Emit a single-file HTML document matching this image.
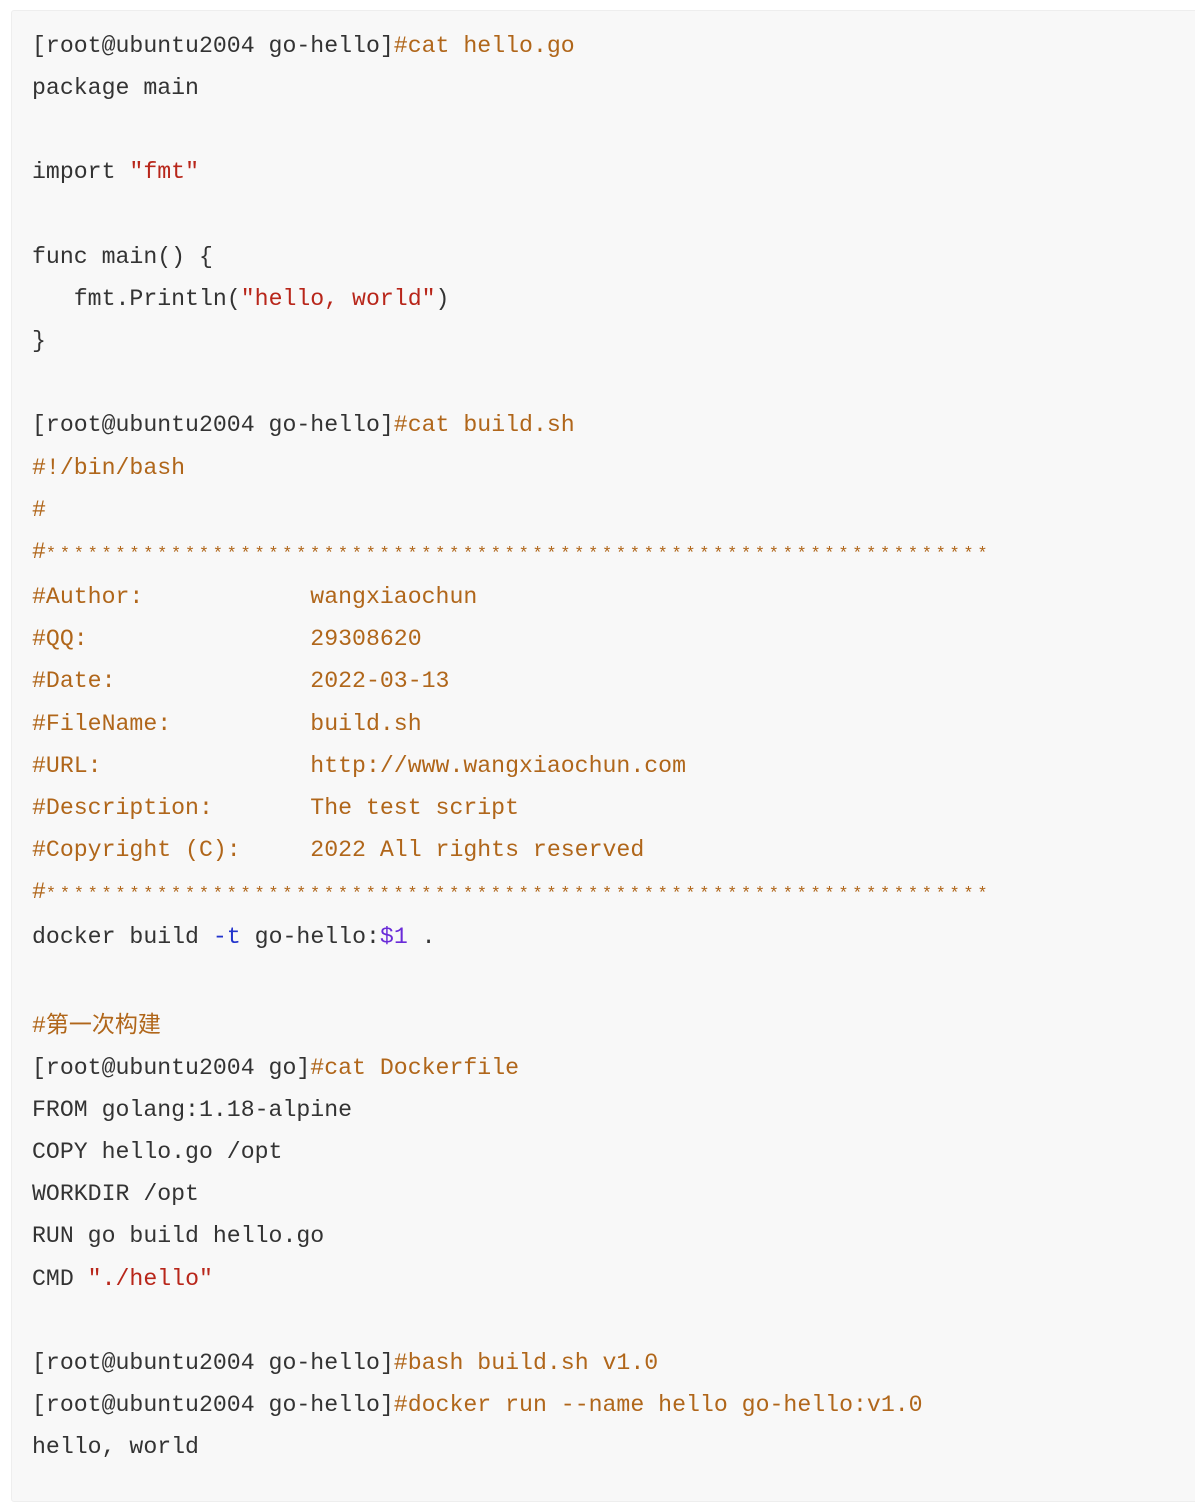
<!DOCTYPE html>
<html><head><meta charset="utf-8"><style>
html,body{margin:0;padding:0;background:#fff;width:1195px;height:1485px;overflow:hidden}
.blk{position:absolute;left:11px;top:10px;width:1190px;height:1490px;background:#f8f8f8;border:1px solid #eeeeee;border-radius:3px}
pre{margin:0;position:absolute;left:32px;top:25px;font-family:"Liberation Mono","Noto Sans CJK SC",monospace;font-size:23.2px;line-height:42.15px;color:#333;white-space:pre}
.c{color:#b0661a}
.s{color:#b8261a}
.k{color:#2233cc}
.v{color:#6a2bd8}
.st{color:#b0661a;font-size:17px;letter-spacing:3.7px}
.cj{font-family:"Noto Sans CJK SC",sans-serif;color:#b0661a;font-size:23px}
</style></head><body>
<div class="blk"></div>
<pre>[root@ubuntu2004 go-hello]<span class="c">#cat hello.go</span>
package main

import <span class="s">"fmt"</span>

func main() {
   fmt.Println(<span class="s">"hello, world"</span>)
}

[root@ubuntu2004 go-hello]<span class="c">#cat build.sh</span>
<span class="c">#!/bin/bash</span>
<span class="c">#</span>
<span class="c">#</span><span class="st">********************************************************************</span>
<span class="c">#Author:            wangxiaochun</span>
<span class="c">#QQ:                29308620</span>
<span class="c">#Date:              2022-03-13</span>
<span class="c">#FileName:          build.sh</span>
<span class="c">#URL:               http://www.wangxiaochun.com</span>
<span class="c">#Description:       The test script</span>
<span class="c">#Copyright (C):     2022 All rights reserved</span>
<span class="c">#</span><span class="st">********************************************************************</span>
docker build <span class="k">-t</span> go-hello:<span class="v">$1</span> .

<span class="c">#</span><span class="cj">第一次构建</span>
[root@ubuntu2004 go]<span class="c">#cat Dockerfile</span>
FROM golang:1.18-alpine
COPY hello.go /opt
WORKDIR /opt
RUN go build hello.go
CMD <span class="s">"./hello"</span>

[root@ubuntu2004 go-hello]<span class="c">#bash build.sh v1.0</span>
[root@ubuntu2004 go-hello]<span class="c">#docker run --name hello go-hello:v1.0</span>
hello, world</pre>
</body></html>
